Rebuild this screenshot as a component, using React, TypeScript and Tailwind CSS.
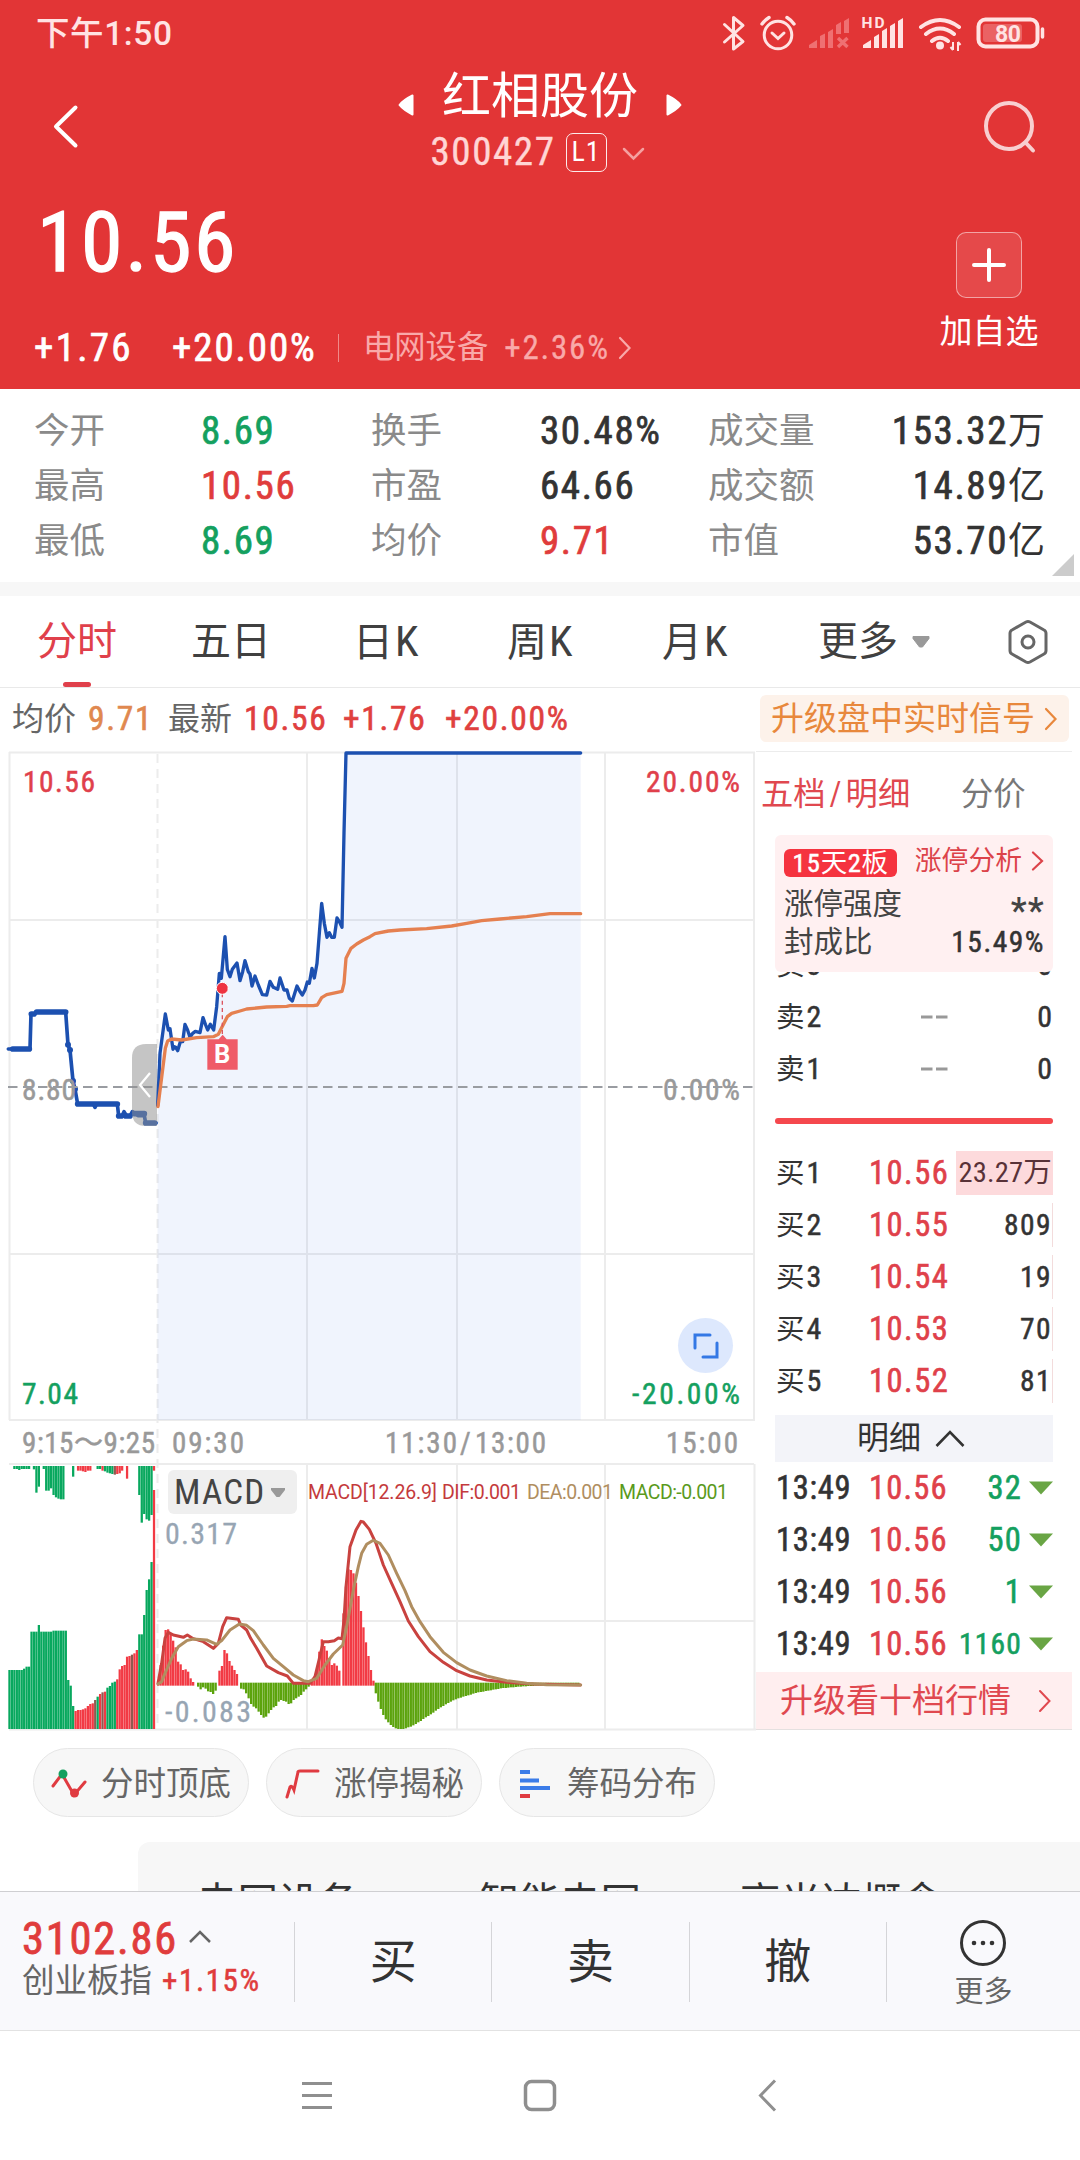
import React from 'react';

const DOWN = '#e03b41';

function Status() {
  return (
    <div className="flex h-[66px] items-center pl-[36px] pr-[34px] pt-px text-[#ffe3e3] [font-family:Roboto,'Noto_Sans_CJK_SC',sans-serif]">
      <span className="text-[33.500px] leading-[40px] font-medium tracking-[0.600px]">下午1:50</span>
      <svg className="ml-auto" width="324" height="40" viewBox="722 14 324 40" fill="none" stroke="currentColor">
        <path d="M724.500 24.500L743 41.500L733.500 49V17.500L743 25.500L724.500 42" strokeWidth="3" strokeLinejoin="round" strokeLinecap="round" />
        <circle cx="778" cy="35" r="13.800" strokeWidth="3" />
        <path d="M772 33l6 5.500 6-5.500" strokeWidth="3" strokeLinecap="round" />
        <path d="M762 24q3-4 7-6.500M787 17.500q4 2.500 7 6.500" strokeWidth="3.400" strokeLinecap="round" />
        <g fill="#ef7072" stroke="none">
          <path d="M809 48v-3l8-5v8zM820 48V36l5-2.500V48zM828 48V32l5-3v19zM836 34v-9l5-3v12zM844 33V21l5-3v15z" />
        </g>
        <path d="M838 38l9.500 9M847.500 38l-9.500 9" stroke="#ef7072" strokeWidth="3.400" />
        <text x="861.500" y="28" fontSize="15.500" fontWeight="700" fill="currentColor" stroke="none" textLength="23">HD</text>
        <g fill="currentColor" stroke="none">
          <path d="M863 48v-3l8-5v8zM874 48V37l5-3v14zM882 48V31l5-3v20zM890 48V26l5-3v25zM898 48V21l5-3v30z" />
          <circle cx="940" cy="45.500" r="4" />
        </g>
        <path d="M921 27q19-14 38 0M926 34q14-11 28 0M932 41q8-6.500 16 0" strokeWidth="4" strokeLinecap="round" />
        <path d="M953 42v8M958 42v9M950.500 47l2.500 3M960.500 45l-2.500-3" strokeWidth="2" />
        <rect x="978.500" y="19.500" width="59" height="27" rx="7" strokeWidth="4" />
        <rect x="983" y="24" width="39" height="18" rx="3" fill="#ea6264" stroke="none" />
        <path d="M1042.500 29v8" strokeWidth="3.500" strokeLinecap="round" />
        <text x="995" y="41.500" fontSize="23" fontWeight="700" fill="currentColor" stroke="none" textLength="26">80</text>
      </svg>
    </div>
  );
}

function Header() {
  return (
    <header className="flex h-[389px] flex-col bg-[#e23536] text-white">
      <Status />
      <div className="flex h-[120px] justify-between pl-[44px] pr-[38px]">
        <svg width="60" height="110" viewBox="44 66 60 110" fill="none" stroke="#fff" strokeWidth="4" strokeLinecap="round" strokeLinejoin="round">
          <path d="M75.500 107.500L56 126.500L75.500 145.500" />
        </svg>
        <div className="ml-[-6px] flex w-[300px] flex-col items-center">
          <div className="mt-[3px] flex h-[56px] items-center">
            <svg className="mt-4" width="16" height="22" viewBox="0 0 16 22"><path d="M14.500 1.500v19q-9-4.500-13-9.500Q5.500 6 14.500 1.500z" fill="#fff" stroke="#fff" strokeWidth="2" strokeLinejoin="round" /></svg>
            <h1 className="mx-[28px] whitespace-nowrap text-[49px] leading-[58px] font-normal">红相股份</h1>
            <svg className="mt-4" width="16" height="22" viewBox="0 0 16 22"><path d="M1.500 1.500v19q9-4.500 13-9.500Q10.500 6 1.500 1.500z" fill="#fff" stroke="#fff" strokeWidth="2" strokeLinejoin="round" /></svg>
          </div>
          <div className="mt-[7px] ml-[-5px] flex h-[40px] items-center">
            <span className="text-[39px] leading-[40px] tracking-[1.600px] text-[#ffd5d5] [-webkit-text-stroke:0.400px_currentColor]">300427</span>
            <span className="ml-[10px] flex h-[39px] w-[41px] items-center justify-center rounded-[7px] border border-white/90 text-[28px] leading-none tracking-[1px]">L1</span>
            <svg className="ml-[15px] mt-1" width="23" height="14" viewBox="0 0 23 14" fill="none" stroke="#f5a0a0" strokeWidth="2.500" strokeLinecap="round"><path d="M2 2l9.500 9.500L21 2" /></svg>
          </div>
        </div>
        <svg width="60" height="110" viewBox="982 66 60 110" fill="none" stroke="#f8cfd0" strokeWidth="4" strokeLinecap="round">
          <circle cx="1009" cy="126" r="23" />
          <path d="M1025.500 142.500l7.500 8" />
        </svg>
      </div>
      <div className="flex h-[203px] justify-between">
        <div className="flex flex-col pl-[34px]">
          <span className="ml-[3px] mt-[15px] text-[84px] leading-[84px] tracking-[2.600px] [-webkit-text-stroke:1.300px_currentColor]">10.56</span>
          <div className="mt-[43px] flex h-[40px] items-center">
            <span className="w-[138px] text-[39px] leading-[40px] tracking-[2.300px] [-webkit-text-stroke:0.700px_currentColor]">+1.76</span>
            <span className="w-[166px] text-[39px] leading-[40px] tracking-[1.900px] [-webkit-text-stroke:0.700px_currentColor]">+20.00%</span>
            <span className="h-[28px] w-px bg-[#f08a8a]" />
            <span className="ml-[24px] text-[31.300px] leading-[40px] text-[#f9a9a9]">电网设备</span>
            <span className="ml-[16px] whitespace-nowrap text-[33px] leading-[40px] tracking-[1.800px] text-[#f9a9a9] [-webkit-text-stroke:0.300px_currentColor]">+2.36%</span>
            <svg className="ml-[8px]" width="14" height="24" viewBox="0 0 14 24" fill="none" stroke="#f9a9a9" strokeWidth="2.200" strokeLinecap="round"><path d="M2 2l9.500 10L2 22" /></svg>
          </div>
        </div>
        <div className="mr-[40px] mt-[46px] flex w-[102px] flex-col items-center">
          <div className="flex h-[66px] w-[66px] items-center justify-center rounded-[10px] border border-white/50 bg-white/10">
            <svg width="36" height="36" viewBox="0 0 36 36" stroke="#fff" strokeWidth="4" strokeLinecap="round"><path d="M18 3v30M3 18h30" /></svg>
          </div>
          <span className="mt-[14px] whitespace-nowrap text-[33px] leading-[40px]">加自选</span>
        </div>
      </div>
    </header>
  );
}

const stats = [
  ['今开', '8.69', 'text-[#14a05f]', '换手', '30.48%', 'text-[#333]', '成交量', '153.32', '万'],
  ['最高', '10.56', 'text-[#e03c3c]', '市盈', '64.66', 'text-[#333]', '成交额', '14.89', '亿'],
  ['最低', '8.69', 'text-[#14a05f]', '均价', '9.71', 'text-[#e03c3c]', '市值', '53.70', '亿'],
];

function Stats() {
  return (
    <section className="relative h-[193px] pl-[34px] pr-[35px] pt-[15px]">
      {stats.map((s) => (
        <div key={s[0]} className="flex h-[55px] items-center text-[39px] leading-[55px] tracking-[1.600px]">
          <span className="w-[167px] text-[35.500px] tracking-normal text-[#8a8a8a]">{s[0]}</span>
          <span className={'w-[170px] [-webkit-text-stroke:0.700px_currentColor] ' + s[2]}>{s[1]}</span>
          <span className="w-[169px] text-[35.500px] tracking-normal text-[#8a8a8a]">{s[3]}</span>
          <span className={'w-[168px] [-webkit-text-stroke:0.700px_currentColor] ' + s[5]}>{s[4]}</span>
          <span className="text-[35.500px] tracking-normal text-[#8a8a8a]">{s[6]}</span>
          <span className="ml-auto text-[#333]"><span className="[-webkit-text-stroke:0.700px_currentColor]">{s[7]}</span><span className="text-[37px] tracking-normal">{s[8]}</span></span>
        </div>
      ))}
      <span className="absolute bottom-[6px] right-[6px] h-[22px] w-[22px] bg-[#ccc] [clip-path:polygon(100%_0,100%_100%,0_100%)]" />
    </section>
  );
}

function Tabs() {
  return (
    <nav className="flex h-[92px] items-center border-b border-[#e9e9e9] pl-[37px] text-[40px] leading-[50px] text-[#404040]">
      <div className="relative w-[154px] text-[#e0404b]">
        分时
        <span className="absolute left-[26px] top-[65px] h-[5px] w-[28px] rounded-full bg-[#e0404b]" />
      </div>
      <span className="w-[162px]">五日</span>
      <span className="w-[154px]">日<span className="ml-[2px] text-[43px]">K</span></span>
      <span className="w-[155px]">周<span className="ml-[2px] text-[43px]">K</span></span>
      <span className="w-[156px]">月<span className="ml-[2px] text-[43px]">K</span></span>
      <span>更多</span>
      <svg className="ml-[13px]" width="20" height="14" viewBox="0 0 20 14"><path d="M2 1.500h16v2L11.500 12h-3L2 3.500z" fill="#999" stroke="#999" strokeLinejoin="round" /></svg>
      <svg className="ml-auto mr-[31px]" width="42" height="46" viewBox="0 0 42 46" fill="none" stroke="#666" strokeWidth="3">
        <path d="M19 3Q21 2 23 3L37 11Q39 12 39 14.500V31.500Q39 34 37 35L23 43Q21 44 19 43L5 35Q3 34 3 31.500V14.500Q3 12 5 11Z" />
        <circle cx="21" cy="23" r="6" />
      </svg>
    </nav>
  );
}

function InfoRow() {
  return (
    <div className="flex h-[64px] items-center pl-[12px] pr-[11px] text-[33.500px] leading-[44px] tracking-[1.700px] text-[#e0403f]">
      <span className="w-[76px] text-[32px] tracking-normal text-[#666]">均价</span>
      <span className="w-[80px] text-[#e0884f] [-webkit-text-stroke:0.600px_currentColor]">9.71</span>
      <span className="w-[76px] text-[32px] tracking-normal text-[#666]">最新</span>
      <span className="w-[99px] [-webkit-text-stroke:0.600px_currentColor]">10.56</span>
      <span className="w-[102px] [-webkit-text-stroke:0.600px_currentColor]">+1.76</span>
      <span className="[-webkit-text-stroke:0.600px_currentColor]">+20.00%</span>
      <div className="ml-auto mt-[-1px] flex h-[47px] w-[309px] items-center rounded-[6px] bg-[#fdf2ea] pl-[11px] font-normal text-[#e8883c]">
        <span className="whitespace-nowrap text-[33px] leading-[47px] tracking-normal">升级盘中实时信号</span>
        <svg className="ml-[9px]" width="14" height="24" viewBox="0 0 14 24" fill="none" stroke="#e8883c" strokeWidth="2.200" strokeLinecap="round"><path d="M2 2l9.500 10L2 22" /></svg>
      </div>
    </div>
  );
}

const pre = '25,927 90,927 93,822 103,822 110,816 197,816 204,914 210,930 219,1023 225,1047 233,1092 280,1092 285,1102 290,1092 352,1092 356,1128 366,1128 372,1115 380,1128 390,1128 397,1115 405,1120 415,1127 433,1127 437,1149 468,1149';
const price = '473,1096 480,940 496,822 505,870 510,866 519,928 523,920 527,922 533,932 541,905 548,905 555,853 562,868 570,892 578,880 586,874 600,878 609,833 617,855 623,870 631,853 641,870 650,800 658,700 664,715 675,590 682,688 690,710 697,688 711,669 720,722 728,695 735,662 745,695 750,702 756,738 765,708 775,735 787,764 800,765 810,724 820,742 833,748 840,714 852,750 861,750 868,775 877,783 891,738 899,753 907,765 915,750 922,726 928,730 936,685 943,714 951,670 958,580 965,490 973,550 981,592 988,578 995,592 1003,592 1011,534 1018,545 1026,562 1032,280 1038,39 1742,39';
const avg = '474,1100 496,925 503,903 515,897 545,900 590,893 640,890 655,883 668,857 682,830 695,820 720,813 740,807 770,804 800,801 860,799 870,797 940,797 952,795 965,773 980,764 1026,754 1032,730 1038,655 1053,625 1070,612 1090,600 1110,590 1125,581 1165,573 1200,570 1280,566 1355,558 1400,550 1445,542 1500,537 1580,530 1650,521 1742,521';
const dif = '474,850 485,790 495,715 505,697 520,705 550,712 562,705 580,716 610,725 640,745 655,730 668,680 680,653 715,658 722,675 740,690 752,715 770,745 800,798 835,818 862,828 880,850 930,850 945,830 957,780 970,725 985,725 1003,722 1015,714 1026,716 1032,660 1038,560 1050,440 1068,390 1083,364 1090,366 1108,388 1128,430 1150,495 1175,550 1200,605 1225,663 1255,710 1290,755 1330,787 1370,812 1410,828 1460,840 1520,847 1600,852 1742,855';
const dea = '474,852 485,845 495,820 515,775 535,740 560,722 580,717 620,720 650,733 665,722 690,690 718,672 740,676 760,692 790,735 820,775 850,800 880,825 910,842 925,845 950,835 975,795 1000,762 1028,735 1040,680 1060,570 1075,500 1085,460 1100,433 1120,421 1140,430 1165,465 1190,520 1215,572 1235,620 1260,665 1290,710 1330,757 1370,788 1410,810 1460,828 1520,842 1580,850 1640,854 1742,855';

const G = '#08a85e';
const R = '#f23a44';
const M = '#8f5a50';

type Run = [number, string, number[]];

const auctionBars: Run[] = [
  [0, G, [810, 810, 810, 810, 810, 810, 806, 800, 800, 695, 695, 695, 675, 695, 695, 695, 695, 695, 692, 692, 692, 692, 692, 692, 840, 857, 918]],
  [27, R, [933, 930, 930, 928, 925, 918, 912, 910]],
  [35, M, [900]],
  [36, G, [890]],
  [37, R, [882]],
  [38, M, [877]],
  [39, R, [875]],
  [40, G, [863, 858, 848, 845]],
  [44, R, [838, 808, 798, 795, 770, 768]],
  [50, M, [764]],
  [51, R, [760, 750]],
  [53, G, [703, 703, 645, 570, 538, 486]],
  [59, R, [270]],
];
const auctionTop: Run[] = [
  [2, G, [207, 207, 210, 207, 207, 207, 207]],
  [10, G, [208, 278, 260]],
  [14, G, [207, 272, 272, 265, 285, 292, 296, 298, 298]],
  [26, G, [230]],
  [28, R, [212, 212, 214, 216, 212, 212]],
  [36, G, [207, 207]],
  [38, R, [212]],
  [39, G, [214, 218, 220, 222]],
  [43, M, [224]],
  [44, R, [222, 220, 212]],
  [48, R, [236]],
  [53, G, [285, 368, 342, 358, 362, 345]],
  [59, R, [212]],
];

const OG = '#5ba30c';
const macd: Run[] = [
  [471, R, [850, 795, 737, 690, 688, 700, 722, 742, 785, 793, 810, 808, 815, 835, 846]],
  [591, OG, [860, 868, 862, 866, 874, 876, 882, 872]],
  [655, R, [812, 798, 750, 760, 783, 797, 810, 822]],
  [720, OG, [866, 868, 880, 895, 912, 920, 925, 935, 945, 953, 950, 940, 930, 922, 918, 905, 900, 903, 905, 912, 910, 900, 895, 890, 885, 875, 868, 860]],
  [932, R, [840, 830, 812, 755, 718, 738, 752, 775, 795, 790, 797, 812]],
  [1027, R, [640, 560, 508, 510, 520, 548, 588, 633, 682, 727, 768, 810, 842]],
  [1124, OG, [880, 905, 927, 945, 958, 967, 975, 981, 985, 987, 987, 987, 985, 982, 980, 976, 972, 967, 963, 957, 952, 948, 943, 938, 932, 927, 922, 918, 913, 909, 905, 901, 898, 895, 893, 890, 888, 886, 884, 881, 879, 877, 876, 875, 873, 872, 871, 869, 868, 867, 865, 864, 864, 863, 862, 862, 861, 860, 860, 859, 859, 858, 858, 858, 857, 857, 857, 857, 857, 857, 856, 856, 856, 856, 856, 856, 856, 856, 856, 856, 856, 856]],
];

function Chart() {
  return (
    <div className="relative h-[980px] w-[756px] shrink-0">
      <svg className="block" width="756" height="980" viewBox="0 751 756 980">
        <g stroke="#ececec" strokeWidth="2" fill="none">
          <path d="M9 752.500H755M9 920H754M9 1254H754M9 1420H755M9.500 752V1420M307 752V1420M457 752V1420M605 752V1420M754 752V1420" />
          <path d="M9 1464H754M157 1621H754M307 1464V1729M457 1464V1729M605 1464V1729M754.500 1464V1729M9 1729.500H756" />
          <path d="M157.500 754V1729" strokeDasharray="9 6" />
        </g>
        <g transform="translate(0 740) scale(.33333)" strokeLinejoin="round" strokeLinecap="round" fill="none">
          <polygon points={price + ' 1742,2040 472,2040'} fill="#3b78e7" fillOpacity=".08" />
          <polyline points={pre} stroke="#1c50b0" strokeWidth="11" />
          <path d="M38 927H88M94 822H102M110 816H197M233 1092H352M356 1128H364M377 1128H390M405 1121H433M437 1149H464" stroke="#1c50b0" strokeWidth="17" />
          <g fill="#1c50b0" stroke="none"><circle cx="204" cy="914" r="9" /><circle cx="210" cy="930" r="9" /><circle cx="219" cy="1023" r="9" /><circle cx="225" cy="1047" r="9" /></g>
        </g>
        <g fontSize="29.500" fill="#e0404b" stroke="#e0404b" strokeWidth=".5">
          <text x="23" y="792" textLength="72">10.56</text>
          <text x="646" y="792" textLength="94">20.00%</text>
          <g fill="#999" stroke="#999">
            <text x="22" y="1100" textLength="54">8.80</text>
            <text x="663" y="1100" textLength="77">0.00%</text>
            <g fontSize="29">
              <text x="22" y="1453" textLength="133">9:15～9:25</text>
              <text x="172" y="1453" textLength="72">09:30</text>
              <text x="385" y="1453" textLength="72">11:30</text>
              <text x="460" y="1453">/</text>
              <text x="475" y="1453" textLength="71">13:00</text>
              <text x="666" y="1453" textLength="72">15:00</text>
            </g>
          </g>
          <g fill="#14a05f" stroke="#14a05f">
            <text x="22" y="1404" textLength="56">7.04</text>
            <text x="632" y="1404" textLength="108">-20.00%</text>
          </g>
        </g>
        <path d="M8 1087H754" stroke="#999ca1" strokeWidth="2" strokeDasharray="9.500 5.500" />
        <path d="M157 1126H146Q132 1126 132 1112V1058Q132 1044 146 1044H157Z" fill="#8f8f8f" fillOpacity=".52" />
        <path d="M150 1073l-10 12 10 12" fill="none" stroke="#fff" strokeWidth="2.200" />
        <g transform="translate(0 740) scale(.33333)" strokeLinejoin="round" strokeLinecap="round" fill="none">
          <polyline points={price} stroke="#1c50b0" strokeWidth="10" />
          <polyline points={avg} stroke="#e58050" strokeWidth="10" />
          <path d="M667 760V890" stroke="#dc5560" strokeWidth="4" strokeDasharray="12 10" strokeLinecap="butt" />
          <circle cx="667" cy="745" r="18" fill="#ee3340" stroke="#fff" strokeWidth="3" />
          <path d="M622 898H656L668 884L680 898H713V989H622Z" fill="#ef5b68" />
        </g>
        <text className="[font-family:Roboto,sans-serif]" x="214" y="1063" fontSize="25.500" fontWeight="700" fill="#fff">B</text>
        <g transform="translate(0 1400) scale(.33333)">
          {auctionBars.map(([s, c, v]) => v.map((t, i) => <rect key={s + '-' + i} x={25 + (s + i) * 7.35} y={t} width="6.800" height={987 - t} fill={c} />))}
          {auctionTop.map(([s, c, v]) => v.map((t, i) => <rect key={s + '-' + i} x={25 + (s + i) * 7.35} y={198} width="6.800" height={t - 198} fill={c} />))}
          {macd.map(([s, c, v]) => v.map((t, i) => (
            <rect key={s + '-' + i} x={s + i * 7.5} y={c === R ? t : 848} width="6.900" height={c === R ? 857 - t : t - 848} fill={c} />
          )))}
          <g fill="none" strokeWidth="9" strokeLinejoin="round" strokeLinecap="round">
            <polyline points={dif} stroke="#c9423f" />
            <polyline points={dea} stroke="#b08e60" />
          </g>
        </g>
        <g fill="#97a5b3" stroke="#97a5b3" strokeWidth=".3" fontSize="30">
          <text x="165" y="1544" textLength="72">0.317</text>
          <text x="165" y="1721.500" textLength="86">-0.083</text>
        </g>
        <g className="[font-family:Roboto,sans-serif]" fontSize="19.500">
          <text x="308" y="1499" textLength="129" fill="#c43a3c">MACD[12.26.9]</text>
          <text x="442" y="1499" textLength="79" fill="#c43a3c">DIF:0.001</text>
          <text x="527" y="1499" textLength="86" fill="#b08e60">DEA:0.001</text>
          <text x="619" y="1499" textLength="109" fill="#5a9a1c">MACD:-0.001</text>
        </g>
      </svg>
      <button className="absolute left-[168px] top-[719px] flex h-[44px] w-[129px] items-center rounded-[6px] bg-[#efefef] pl-[6px] pt-px text-[35px] leading-[46px] text-[#444]">
        <span className="w-[90px] tracking-[1.200px]">MACD</span>
        <svg className="ml-[6px]" width="16" height="12" viewBox="0 0 16 12"><path d="M1 1h14v2L9.500 10h-3L1 3z" fill="#999" /></svg>
      </button>
      <button className="absolute left-[678px] top-[567px] flex h-[55px] w-[55px] items-center justify-center rounded-full bg-[#dde8fd]">
        <svg width="28" height="28" viewBox="0 0 28 28" fill="none" stroke="#3478e5" strokeWidth="3" strokeLinecap="round"><path d="M3 16V3H18M25 11V25H11" /></svg>
      </button>
    </div>
  );
}

const bids = [
  ['买1', '10.56', '23.27万'],
  ['买2', '10.55', '809'],
  ['买3', '10.54', '19'],
  ['买4', '10.53', '70'],
  ['买5', '10.52', '81'],
];

function Level({ n }: { n: string }) {
  return (
    <div className="flex h-[52px] items-center text-[30px] leading-[52px] text-[#333]">
      <span className="w-[146px] pl-px text-[28.500px]">卖<span className="ml-[2px] text-[30px] [-webkit-text-stroke:0.500px_currentColor]">{n}</span></span>
      <svg width="27" height="4" viewBox="0 0 27 4"><path d="M0 2H11.500M15 2H26.500" stroke="#999" strokeWidth="3" /></svg>
      <span className="ml-auto pr-px [-webkit-text-stroke:0.500px_currentColor]">0</span>
    </div>
  );
}

function OrderBook() {
  return (
    <aside className="h-[980px] w-[316px]">
      <div className="flex h-[84px] items-center border-t border-[#ececec] pl-[5px] text-[32.300px] leading-[84px]">
        <span className="w-[200px] text-[#e0484f]">五档<span className="mx-[4px]">/</span>明细</span>
        <span className="text-[#777]">分价</span>
      </div>
      <div className="ml-[19px] w-[278px]">
        <div className="relative z-10 h-[137px] rounded-[6px] bg-[#fff0f1] px-[9px] pt-[13px] text-[29.500px] leading-[38px] text-[#444]">
          <div className="flex h-[30px] items-center justify-between">
            <span className="flex h-[28px] w-[113px] items-center justify-center rounded-[6px] bg-[#f5333f] text-[26.500px] leading-[28px] tracking-[0.500px] text-white">
              <span className="tracking-[1px] [-webkit-text-stroke:0.500px_currentColor]">15</span>天<span className="[-webkit-text-stroke:0.500px_currentColor]">2</span>板
            </span>
            <span className="-mt-1 flex items-center whitespace-nowrap text-[26.800px] text-[#dc434a]">涨停分析
              <svg className="ml-[9px]" width="13" height="20" viewBox="0 0 13 20" fill="none" stroke="#dc434a" strokeWidth="2.200" strokeLinecap="round"><path d="M2 1.500l9 8.500-9 8.500" /></svg>
            </span>
          </div>
          <div className="mt-[7px] flex h-[38px] justify-between"><span>涨停强度</span><span className="-mr-px mt-[7px] text-[36px] font-medium tracking-[1.200px]">**</span></div>
          <div className="flex h-[38px] justify-between"><span>封成比</span><span className="-mr-px tracking-[1.500px] text-[#333] [-webkit-text-stroke:0.500px_currentColor]">15.49%</span></div>
        </div>
        <div className="-mt-[33px]"><Level n="3" /><Level n="2" /><Level n="1" /></div>
        <div className="mt-[23px] h-[6px] rounded-full bg-[#f5484d]" />
        <div className="mt-[23px]">
          {bids.map(([l, p, v], i) => (
            <div key={l} className="flex h-[52px] items-center leading-[44px] text-[#333]">
              <span className="w-[94px] shrink-0 pl-px text-[28.500px]">买<span className="ml-[2px] text-[30px] [-webkit-text-stroke:0.500px_currentColor]">{l[1]}</span></span>
              <span className="text-[32.500px] tracking-[1.500px] text-[#df414a] [-webkit-text-stroke:0.600px_currentColor]">{p}</span>
              <span className={'ml-auto flex h-[44px] items-center justify-end whitespace-nowrap border-r ' + (i === 0 ? 'w-[97px] border-[#fddadc] bg-[#fddadc] text-[28.500px] tracking-[0.200px] text-[#593238]' : 'border-[#f3dcdc] text-[29.500px] tracking-[1.400px] [-webkit-text-stroke:0.500px_currentColor]')}>{v}</span>
            </div>
          ))}
        </div>
        <div className="mt-[8px] flex h-[47px] items-center justify-center bg-[#f3f4f9] pr-[6px] text-[32px] leading-[47px] text-[#333]">
          明细
          <svg className="ml-[14px]" width="30" height="18" viewBox="0 0 30 18" fill="none" stroke="#333" strokeWidth="2.600"><path d="M1.500 16L15 2l13.500 14" /></svg>
        </div>
        {['32', '50', '1', '1160'].map((v) => (
          <div key={v} className="flex h-[52px] items-center text-[32.500px] leading-[52px] tracking-[1.200px] text-[#333] [-webkit-text-stroke:0.600px_currentColor]">
            <span className="w-[94px] pl-px tracking-[0.700px]">13:49</span>
            <span className="text-[#df414a]">10.56</span>
            <span className={'ml-auto text-[#14a05f] ' + (v === '1160' ? 'text-[29.500px]' : '')}>{v}</span>
            <svg className="ml-[7px]" width="24" height="14" viewBox="0 0 24 14"><path d="M0 .5h24L12 13.500z" fill="#69a544" /></svg>
          </div>
        ))}
      </div>
      <div className="mt-[2px] flex h-[58px] items-center border-b border-[#e5e0e0] bg-[#ffeeef] pl-[24px] text-[33px] leading-[57px] text-[#e0484f]">
        升级看十档行情
        <svg className="ml-auto mr-[20px]" width="14" height="24" viewBox="0 0 14 24" fill="none" stroke="#e0484f" strokeWidth="2" strokeLinecap="round"><path d="M2 2l9.500 10L2 22" /></svg>
      </div>
    </aside>
  );
}

function Pill({ label, children }: { label: string; children: React.ReactNode }) {
  return (
    <div className="flex h-[69px] w-[216px] items-center rounded-full border border-[#e6e6e6] bg-[#f7f7f7] pl-[17px] pt-[2px] text-[32.500px] leading-[60px] text-[#666]">
      <svg className="mr-[14px]" width="36" height="32" viewBox="0 0 36 32" fill="none" strokeWidth="3" strokeLinecap="round">{children}</svg>
      {label}
    </div>
  );
}

function BottomBar() {
  return (
    <footer className="flex h-[140px] border-y border-b-[#e2e2e2] border-t-[#cfcfd2] bg-[#f9f9fc] text-[#333]">
      <div className="w-[294px] pl-[22px] pt-[25px]">
        <div className="flex h-[44px] items-center text-[44.500px] leading-[44px] tracking-[1.800px] text-[#e03c3c]">
          <span className="w-[156px] [-webkit-text-stroke:0.800px_currentColor]">3102.86</span>
          <svg className="ml-[10px] -mt-1" width="24" height="14" viewBox="0 0 24 14" fill="none" stroke="#666" strokeWidth="2.500"><path d="M2 12L12 2l10 10" /></svg>
        </div>
        <div className="flex h-[40px] items-center whitespace-nowrap text-[32.500px] leading-[40px] text-[#666]">
          创业板指<span className="ml-[10px] text-[31px] tracking-[1.600px] text-[#e03c3c] [-webkit-text-stroke:0.500px_currentColor]">+1.15%</span>
        </div>
      </div>
      {['买', '卖', '撤'].map((t) => (
        <div key={t} className="mt-[30px] flex h-[80px] w-[197.300px] items-center justify-center border-l border-[#d5d5d8] text-[47px] leading-[78px]">{t}</div>
      ))}
      <div className="mt-[30px] h-[80px] border-l border-[#d5d5d8]" />
      <div className="flex flex-1 flex-col items-center pt-[27px]">
        <svg width="48" height="48" viewBox="0 0 48 48" fill="#333"><circle cx="24" cy="24" r="21.500" fill="none" stroke="#333" strokeWidth="3" /><circle cx="15" cy="24" r="2.300" /><circle cx="24" cy="24" r="2.300" /><circle cx="33" cy="24" r="2.300" /></svg>
        <span className="mt-[6px] text-[29px] leading-[38px] text-[#666]">更多</span>
      </div>
    </footer>
  );
}

export default function App() {
  return (
    <div className="flex h-[2160px] w-[1080px] flex-col overflow-hidden bg-white [font-family:'Roboto_Condensed',Roboto,'Noto_Sans_CJK_SC',sans-serif]">
      <Header />
      <Stats />
      <div className="h-[14px] shrink-0 bg-[#f7f7f7]" />
      <Tabs />
      <div className="-mt-px"><InfoRow /></div>
      <div className="flex h-[980px]">
        <Chart />
        <OrderBook />
      </div>
      <div className="flex h-[111px] gap-[17px] pl-[33px] pt-[17px]">
        <Pill label="分时顶底">
          <path d="M2 18L11 6L23 27L34 14" stroke={DOWN} />
          <circle cx="12" cy="6" r="4.500" fill="#14a05f" />
          <circle cx="23.500" cy="25" r="4.500" fill={DOWN} />
        </Pill>
        <Pill label="涨停揭秘"><path d="M3 29L6 19Q8 17 10 22L14 4Q14 3 16 3H34" stroke={DOWN} /></Pill>
        <Pill label="筹码分布">
          <path d="M3 4H13M3 12.500H22M3 20H33" stroke="#3b7ce8" strokeLinecap="butt" strokeWidth="4" />
          <path d="M3 28H13" stroke={DOWN} strokeLinecap="butt" strokeWidth="4" />
        </Pill>
      </div>
      <div className="flex h-[49px] overflow-hidden text-[40.500px] leading-[48px] text-[#333]">
        <span className="w-[138px] pl-[44px] pt-[41px] text-[31px] font-medium">所属</span>
        <div className="flex flex-1 rounded-tl-[12px] bg-[#f7f7f7] pl-[59px] pt-[37px] whitespace-nowrap">
          <span className="w-[282px]">电网设备</span>
          <span className="w-[261px]">智能电网</span>
          <span>高光达概念</span>
        </div>
      </div>
      <BottomBar />
      <div className="flex flex-1 justify-center pt-[46px]">
        <svg className="h-[36px] w-[480px]" width="480" height="36" viewBox="300 2076 480 36" fill="none" stroke="#8f8f8f" strokeWidth="3">
          <path d="M302 2082.500H332M302 2094.500H332M302 2106.500H332" />
          <rect x="525.500" y="2080.500" width="29" height="28" rx="6" strokeWidth="3.500" />
          <path d="M775 2079.500L760.500 2094.500L775 2109.500" />
        </svg>
      </div>
    </div>
  );
}
